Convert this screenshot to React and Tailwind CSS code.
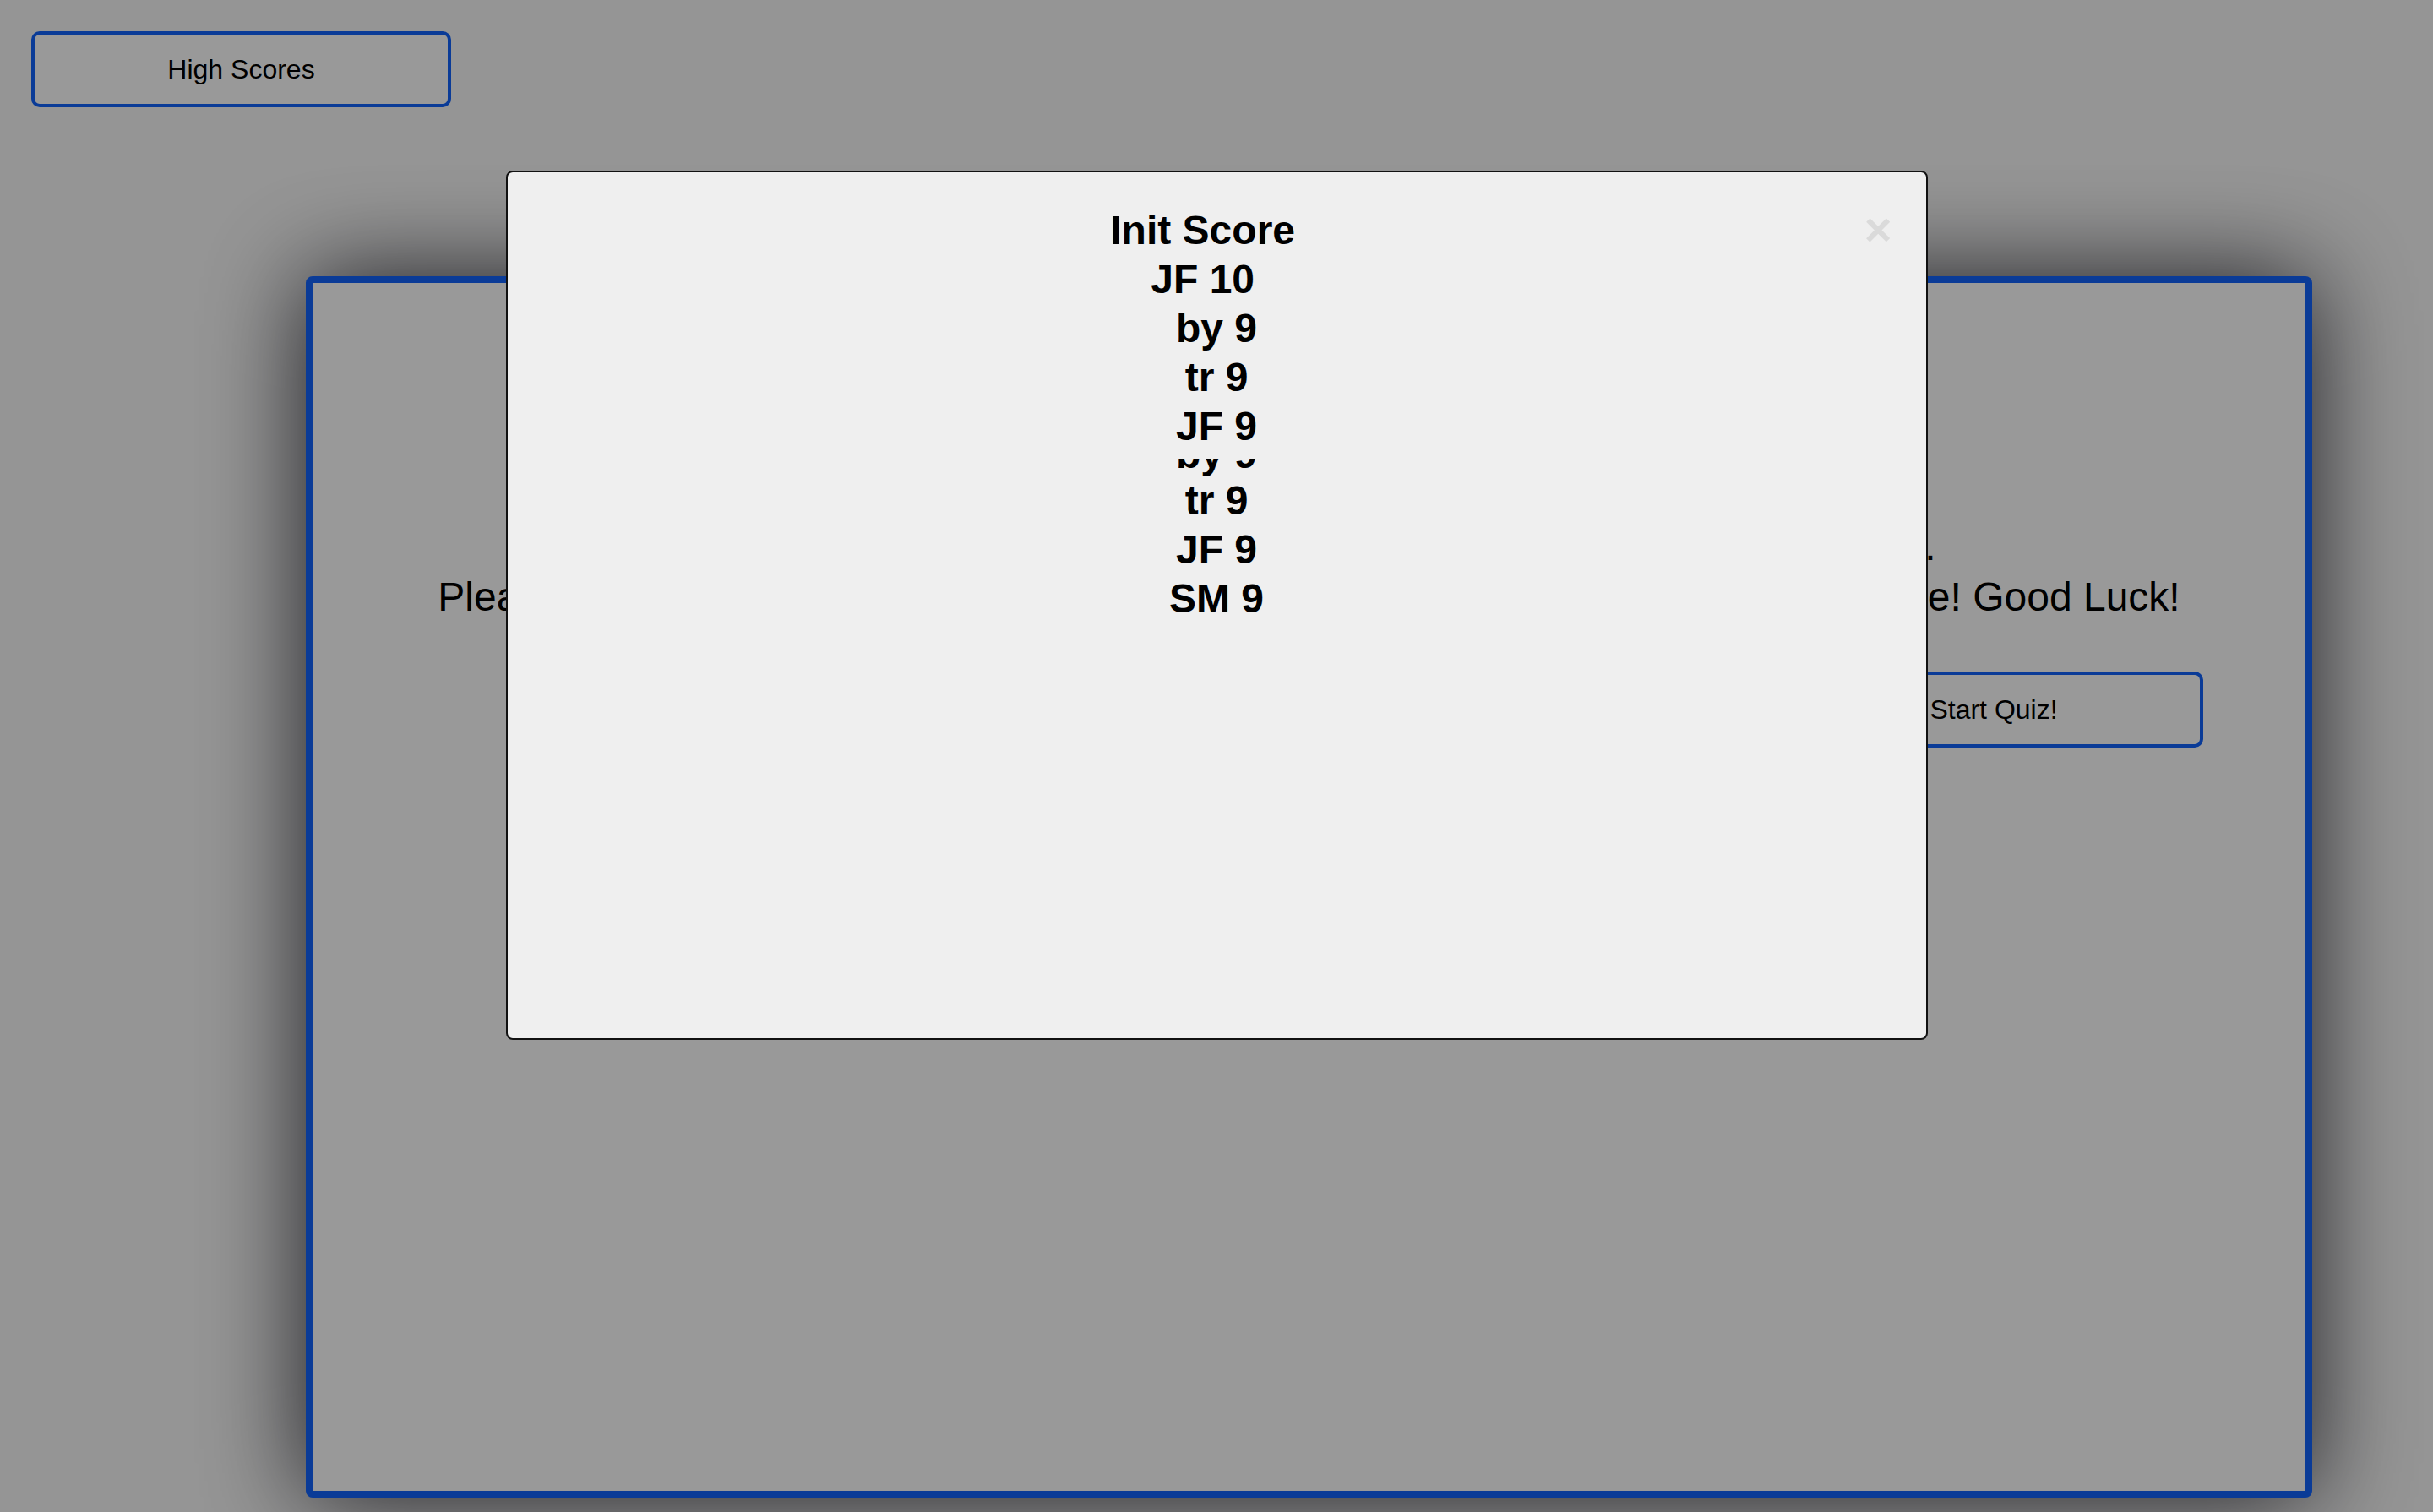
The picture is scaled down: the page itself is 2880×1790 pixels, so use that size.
import React from "react";

const scores = [
  { init: "JF", score: 10 },
  { init: "by", score: 9 },
  { init: "tr", score: 9 },
  { init: "JF", score: 9 },
  { init: "by", score: 9, clipped: true },
  { init: "tr", score: 9 },
  { init: "JF", score: 9 },
  { init: "SM", score: 9 },
];

export default function App() {
  return (
    <div className="relative min-h-screen bg-[#f9f9f9] font-['Liberation_Sans',Arial,sans-serif] text-black">
      <header className="pl-[37px] pt-[37px]">
        <button className="w-[497px] h-[90px] rounded-[10px] border-4 border-[#1163fc] bg-white text-[32px]">
          High Scores
        </button>
      </header>

      {/* Quiz card */}
      <main className="ml-[362px] mt-[200px] w-[2375px] h-[1446px] rounded-[8px] border-8 border-[#1163fc] bg-white shadow-[0_0_120px_rgba(0,0,10,0.8)]">
        <p className="pt-[282px] text-center text-[48px] leading-[60px]">
          Try to answer the next few code-related problems within the time limit.
          <br />
          Please keep in mind that all incorrect answers will penalize your score and your time! Good Luck!
        </p>
        <div className="mt-[58px] flex justify-end pr-[121px]">
          <button className="w-[496px] h-[90px] rounded-[10px] border-4 border-[#1163fc] bg-white text-[32px]">
            Start Quiz!
          </button>
        </div>
      </main>

      {/* High scores modal */}
      <div className="fixed inset-0 bg-black/40">
        <div className="mx-auto mt-[202px] w-[1683px] h-[1029px] rounded-[8px] border-2 border-[#111] bg-[#efefef] p-[40px]">
          {/* close button, tall enough to push the first two lines */}
          <span className="float-right pb-[10px] text-[56px] font-bold leading-[56px] text-[#dadada] cursor-pointer">
            ×
          </span>
          <div className="text-center text-[48px] font-bold leading-[58px]">
            <div>Init Score</div>
            {scores.map((s, i) =>
              s.clipped ? (
                <div key={i} className="h-[30px] pt-[9px]">
                  <div className="h-[21px] overflow-hidden">
                    <div className="-mt-[34px]">
                      {s.init} {s.score}
                    </div>
                  </div>
                </div>
              ) : (
                <div key={i}>
                  {s.init} {s.score}
                </div>
              )
            )}
          </div>
        </div>
      </div>
    </div>
  );
}
